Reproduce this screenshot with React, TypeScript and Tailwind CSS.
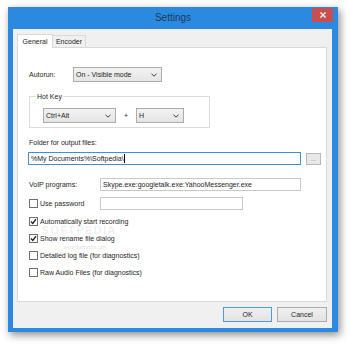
import { useState } from 'react';

function Chevron() {
  return (
    <svg width="6" height="4" viewBox="0 0 6 4" className="shrink-0">
      <path d="M0.5 0.8 L3 3.2 L5.5 0.8" fill="none" stroke="#404040" strokeWidth="1" />
    </svg>
  );
}

function Select({ value, className }: { value: string; className: string }) {
  return (
    <div
      className={`flex items-center justify-between h-[15px] pl-[2px] pr-[4px] border border-[#acacac] bg-gradient-to-b from-[#f2f2f2] to-[#e5e5e5] ${className}`}
    >
      <span>{value}</span>
      <Chevron />
    </div>
  );
}

function CheckBox({ label, checked }: { label: string; checked?: boolean }) {
  return (
    <div className="flex items-center h-[10px] gap-[2px]">
      <div className="w-[9px] h-[9px] border border-[#707070] bg-white flex items-center justify-center">
        {checked && (
          <svg width="7" height="7" viewBox="0 0 7 7">
            <path d="M1 3.5 L2.8 5.4 L6 1.2" fill="none" stroke="#222" strokeWidth="1.4" />
          </svg>
        )}
      </div>
      <span>{label}</span>
    </div>
  );
}

export default function App() {
  const [tab, setTab] = useState('general');

  return (
    <div
      className="w-[350px] h-[346px] bg-white pl-[8px] pt-[7px] text-[7px] leading-none text-[#1e1e1e]"
      style={{ fontFamily: '"Liberation Sans", Arial, sans-serif' }}
    >
      <div className="w-[330px] h-[325px] bg-[#2b8ae0] flex flex-col shadow-[2px_3px_8px_rgba(0,0,0,0.45)]">
        {/* Title bar */}
        <div className="h-[22px] flex items-start relative">
          <div className="flex-1 text-center pt-[6px] text-[10px] text-[#1a3a5c]">Settings</div>
          <div className="absolute right-[5px] top-[1px] w-[21px] h-[14px] bg-[#c74f4f] flex items-center justify-center">
            <svg width="6" height="6" viewBox="0 0 6 6">
              <path d="M0.5 0.5 L5.5 5.5 M5.5 0.5 L0.5 5.5" stroke="#fff" strokeWidth="1.3" />
            </svg>
          </div>
        </div>

        {/* Client */}
        <div className="ml-[5px] mr-[6px] mb-[4px] flex-1 bg-[#f0f0f0] flex flex-col pl-[4px] pr-[5px] pt-[4px]">
          {/* Tabs */}
          <div className="flex items-end h-[14px]">
            <div
              onClick={() => setTab('general')}
              className="h-[14px] w-[36px] bg-white border border-b-0 border-[#d9d9d9] flex items-center justify-center pb-[1px] relative z-10 -mb-px"
            >
              General
            </div>
            <div
              onClick={() => setTab('encoder')}
              className="h-[12px] w-[33px] bg-[#f0f0f0] border border-b-0 border-l-0 border-[#d9d9d9] flex items-center justify-center"
            >
              Encoder
            </div>
          </div>

          {/* Panel */}
          <div className="h-[255px] bg-white border border-[#d9d9d9] pl-[10px] pt-[19px] flex flex-col">
            {tab === 'general' && (
              <>
                <div className="flex items-center">
                  <span className="w-[45px] pl-[1px]">Autorun:</span>
                  <Select value="On - Visible mode" className="w-[89px]" />
                </div>

                {/* Hot Key group */}
                <div className="ml-[1px] mt-[14px] w-[181px] h-[32px] border border-[#dcdcdc] relative pl-[13px] pt-[11px]">
                  <span className="absolute left-[6px] -top-[4px] bg-white px-[1px]">Hot Key</span>
                  <div className="flex items-center">
                    <Select value="Ctrl+Alt" className="w-[73px]" />
                    <span className="w-[20px] text-center">+</span>
                    <Select value="H" className="w-[48px]" />
                  </div>
                </div>

                <div className="mt-[11px] pl-[1px]">Folder for output files:</div>
                <div className="flex items-center mt-[6px]">
                  <div className="w-[273px] h-[13px] border border-[#3c8fd8] bg-white flex items-center pl-[2px]">
                    %My Documents%\Softpedia\<span className="w-px h-[9px] bg-black" />
                  </div>
                  <div className="ml-[5px] w-[15px] h-[12px] border border-[#b8b8b8] bg-[#e8e8e8] flex items-center justify-center text-[6px] text-[#555]">
                    ...
                  </div>
                </div>

                <div className="flex items-center mt-[13px]">
                  <span className="w-[72px] pl-[1px]">VoIP programs:</span>
                  <div className="w-[201px] h-[13px] border border-[#c9c9c9] bg-white flex items-center pl-[2px]">
                    Skype.exe:googletalk.exe:YahooMessenger.exe
                  </div>
                </div>

                <div className="flex items-center mt-[6px]">
                  <div className="w-[72px] pl-[1px]">
                    <CheckBox label="Use password" />
                  </div>
                  <div className="w-[143px] h-[13px] border border-[#c9c9c9] bg-white" />
                </div>

                <div className="flex flex-col gap-[7px] mt-[6px] pl-[1px] relative">
                  <CheckBox label="Automatically start recording" checked />
                  <CheckBox label="Show rename file dialog" checked />
                  <CheckBox label="Detailed log file (for diagnostics)" />
                  <CheckBox label="Raw Audio Files (for diagnostics)" />
                  <span className="absolute left-[14px] top-[10px] text-[10px] tracking-[2px] text-[#ececec] pointer-events-none">
                    SOFTPEDIA
                  </span>
                  <span className="absolute left-[36px] top-[29px] text-[5px] text-[#e4e4e4] pointer-events-none">
                    www.softpedia.com
                  </span>
                </div>
              </>
            )}
          </div>

          {/* Buttons */}
          <div className="flex justify-end gap-[5px] mt-[5px] pr-[0px]">
            <div className="w-[49px] h-[15px] border border-[#4a9be0] bg-gradient-to-b from-[#f0f0f0] to-[#e3e3e3] flex items-center justify-center">
              OK
            </div>
            <div className="w-[50px] h-[15px] border border-[#acacac] bg-gradient-to-b from-[#f0f0f0] to-[#e3e3e3] flex items-center justify-center">
              Cancel
            </div>
          </div>
        </div>
      </div>
    </div>
  );
}
